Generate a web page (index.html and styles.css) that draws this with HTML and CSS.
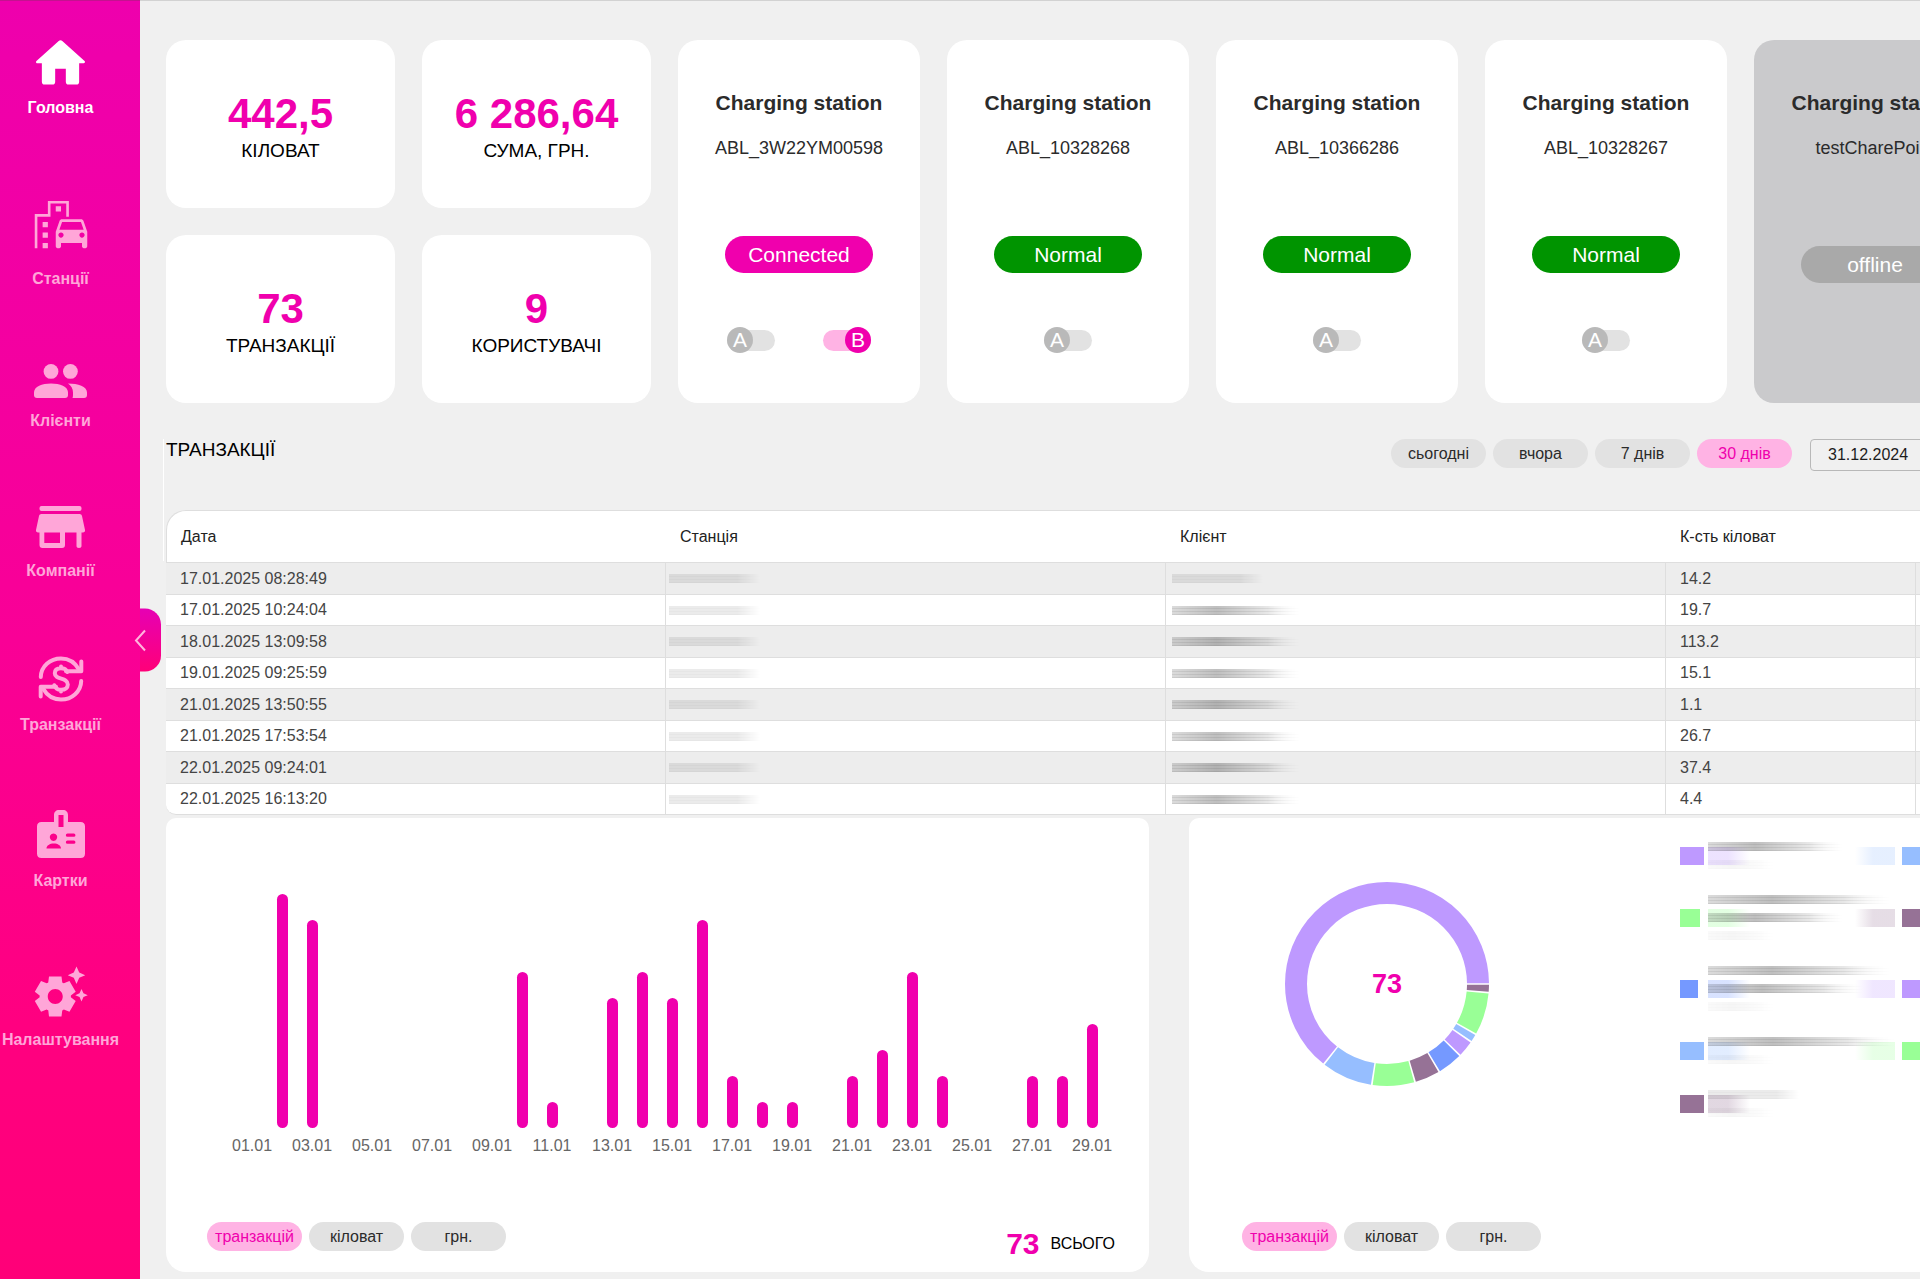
FILE: index.html
```html
<!DOCTYPE html>
<html lang="uk">
<head>
<meta charset="utf-8">
<meta name="viewport" content="width=device-width, initial-scale=1">
<title>Головна</title>
<link rel="stylesheet" href="styles.css">
</head>
<body>
<div class="app">
  <aside class="sidebar">
    <nav class="nav">
      <a class="nav-item active" href="#">
        <svg width="49" height="45" viewBox="2.8 3.3 18.4 16.8"><path d="M10 19v-5h4v5c0 .55.45 1 1 1h3c.55 0 1-.45 1-1v-7h1.7c.46 0 .68-.57.33-.87L12.67 3.6c-.38-.34-.96-.34-1.34 0l-8.36 7.53c-.34.3-.13.87.33.87H5v7c0 .55.45 1 1 1h3c.55 0 1-.45 1-1z"/></svg>
        <span>Головна</span>
      </a>
      <a class="nav-item" href="#">
        <svg width="64" height="63" viewBox="0 0 24 24"><path d="M20.57 10.66C20.43 10.26 20.05 10 19.6 10h-7.19c-.46 0-.83.26-.98.66L10 14.77l.01 5.51c0 .38.31.72.69.72h.62c.38 0 .68-.38.68-.76V19h8v1.24c0 .38.31.76.69.76h.61c.38 0 .69-.34.69-.72l.01-1.37v-4.14l-1.43-4.11zm-8.16.34h7.19l1.03 3h-9.25l1.03-3zM12 17c-.55 0-1-.45-1-1s.45-1 1-1 1 .45 1 1-.45 1-1 1zm8 0c-.55 0-1-.45-1-1s.45-1 1-1 1 .45 1 1-.45 1-1 1z"/><path d="M14 9h1V3H7v5H2v13h1V9h5V4h6zM5 11h2v2H5zM10 5h2v2h-2zM5 15h2v2H5zM5 19h2v2H5z"/></svg>
        <span>Станції</span>
      </a>
      <a class="nav-item" href="#">
        <svg width="53" height="34" viewBox="0 0 53 34"><circle cx="17" cy="7.4" r="7.4"/><circle cx="36.4" cy="7.4" r="7.4"/><path d="M0 31v-2.500c0-6 8-9 17-9s17 3 17 9V31c0 2-1 3-3 3H3c-2 0-3-1-3-3z"/><path d="M34 19.500c10 0 19 3 19 9V31c0 2-1 3-3 3H38.500c.4-1 .5-2 .5-3.500v-2c0-4-2-7-5-9z"/></svg>
        <span>Клієнти</span>
      </a>
      <a class="nav-item" href="#">
        <svg width="49" height="42" viewBox="0 0 49 42"><rect x="3.500" y="0" width="42" height="5" rx="2"/><path fill-rule="evenodd" d="M5.500 8h38c1.400 0 2.200.7 2.500 2l3 14c.2 1.300-.5 2.500-2 2.500h-1.500V40c0 1.300-.8 2-2.500 2s-2.500-.7-2.500-2V26.500H29V39c0 2-1 3-3 3H6.500c-2 0-3-1-3-3V26.500H2c-1.500 0-2.200-1.200-2-2.500l3-14c.3-1.300 1.100-2 2.500-2zM8.300 26.500V37H24V26.500z"/></svg>
        <span>Компанії</span>
      </a>
      <a class="nav-item" href="#">
        <svg class="line-icon" width="46" height="46" viewBox="0 0 46 46"><path d="M2.800 21C3 10.500 12 2.400 23 2.400c8 0 14 4 18 11"/><path d="M43.300 5.500v9.800H28"/><path d="M43.200 25C43 35.500 34 43.600 23 43.600c-8 0-14-4-18-11"/><path d="M2.700 40.500v-9.800H18"/><path d="M29.200 16c-.8-2.500-3-3.800-6.200-3.800-3.800 0-6.200 1.800-6.200 5 0 7 13 4 13 11.300 0 3.300-2.600 5.300-6.600 5.300-3.600 0-6-1.600-6.800-4.600M23 10.500V12M23 34v1.500"/></svg>
        <span>Транзакції</span>
      </a>
      <a class="nav-item" href="#">
        <svg width="48" height="48" viewBox="0 0 48 48"><path fill-rule="evenodd" d="M17 12V5c0-3 2-5 5-5h4c3 0 5 2 5 5v7h12.500c3 0 4.500 1.500 4.500 4.500v27c0 3-1.500 4.500-4.500 4.500h-39C1.500 48 0 46.500 0 43.500v-27c0-3 1.500-4.500 4.500-4.500zM21.500 5v12h5V5zM16.500 23.500a3.700 3.700 0 1 0 .01 0zM9.500 38.500H24c0-3-3.200-5-7.200-5s-7.300 2-7.300 5zM30.500 23.500a1.600 1.600 0 0 0 0 3.300h6.300a1.600 1.600 0 0 0 0-3.300zM30.500 30.500a1.600 1.600 0 0 0 0 3.300h6.300a1.600 1.600 0 0 0 0-3.300z"/></svg>
        <span>Картки</span>
      </a>
      <a class="nav-item" href="#">
        <svg width="53" height="51" viewBox="1.500 1.900 21.200 20.300" overflow="visible"><path d="M17.410 6.590 15 5.500l2.410-1.090L18.500 2l1.090 2.410L22 5.500l-2.410 1.090L18.500 9l-1.090-2.410zm3.870 6.130L20.500 11l-.78 1.720-1.720.78 1.720.78.78 1.720.78-1.720L23 13.500l-1.720-.78zm-5.040 1.650 1.940 1.470-2.500 4.330-2.240-.94c-.2.130-.42.260-.64.370l-.3 2.400h-5l-.3-2.410c-.22-.11-.43-.23-.64-.37l-2.240.94-2.500-4.330 1.940-1.470c-.01-.11-.01-.24-.01-.36s0-.25.010-.37l-1.940-1.470 2.500-4.330 2.240.94c.2-.13.420-.26.640-.37L7.500 6h5l.3 2.410c.22.110.43.230.64.370l2.240-.94 2.500 4.330-1.940 1.470c.010.120.010.240.010.370s0 .240-.010.360zM13 14c0-1.660-1.340-3-3-3s-3 1.340-3 3 1.340 3 3 3 3-1.340 3-3z"/></svg>
        <span>Налаштування</span>
      </a>
    </nav>
    <button class="collapse" type="button" aria-label="Згорнути меню">
      <svg width="14" height="24" viewBox="0 0 14 24"><path d="M12 2 3 12l9 10"/></svg>
    </button>
  </aside>

  <main class="main">
    <div class="content">
      <section class="overview">
        <div class="stats">
          <div class="card stat"><strong>442,5</strong><span>КІЛОВАТ</span></div>
          <div class="card stat"><strong>6 286,64</strong><span>СУМА, ГРН.</span></div>
          <div class="card stat"><strong>73</strong><span>ТРАНЗАКЦІЇ</span></div>
          <div class="card stat"><strong>9</strong><span>КОРИСТУВАЧІ</span></div>
        </div>
        <article class="card station">
          <h2>Charging station</h2><p>ABL_3W22YM00598</p>
          <span class="status connected">Connected</span>
          <div class="connectors">
            <label class="toggle"><input type="checkbox"><span>A</span></label>
            <label class="toggle"><input type="checkbox" checked><span>B</span></label>
          </div>
        </article>
        <article class="card station">
          <h2>Charging station</h2><p>ABL_10328268</p>
          <span class="status">Normal</span>
          <div class="connectors"><label class="toggle"><input type="checkbox"><span>A</span></label></div>
        </article>
        <article class="card station">
          <h2>Charging station</h2><p>ABL_10366286</p>
          <span class="status">Normal</span>
          <div class="connectors"><label class="toggle"><input type="checkbox"><span>A</span></label></div>
        </article>
        <article class="card station">
          <h2>Charging station</h2><p>ABL_10328267</p>
          <span class="status">Normal</span>
          <div class="connectors"><label class="toggle"><input type="checkbox"><span>A</span></label></div>
        </article>
        <article class="card station offline">
          <h2>Charging station</h2><p>testCharePoint</p>
          <span class="status">offline</span>
        </article>
      </section>

      <section class="transactions">
        <header class="section-head">
          <h1>ТРАНЗАКЦІЇ</h1>
          <div class="filters">
            <button class="chip" type="button">сьогодні</button>
            <button class="chip" type="button">вчора</button>
            <button class="chip" type="button">7 днів</button>
            <button class="chip selected" type="button">30 днів</button>
            <input class="date" type="text" value="31.12.2024" aria-label="Дата від">
          </div>
        </header>
        <table class="table">
          <thead>
            <tr><th class="wide">Дата</th><th class="wide">Станція</th><th class="wide">Клієнт</th><th class="narrow">К-сть кіловат</th><th></th></tr>
          </thead>
          <tbody>
            <tr><td>17.01.2025 08:28:49</td><td class="hidden"><i class="smear pale"></i></td><td class="hidden client"><i class="smear pale"></i></td><td>14.2</td><td></td></tr>
            <tr><td>17.01.2025 10:24:04</td><td class="hidden"><i class="smear pale"></i></td><td class="hidden client"><i class="smear"></i></td><td>19.7</td><td></td></tr>
            <tr><td>18.01.2025 13:09:58</td><td class="hidden"><i class="smear pale"></i></td><td class="hidden client"><i class="smear"></i></td><td>113.2</td><td></td></tr>
            <tr><td>19.01.2025 09:25:59</td><td class="hidden"><i class="smear pale"></i></td><td class="hidden client"><i class="smear"></i></td><td>15.1</td><td></td></tr>
            <tr><td>21.01.2025 13:50:55</td><td class="hidden"><i class="smear pale"></i></td><td class="hidden client"><i class="smear"></i></td><td>1.1</td><td></td></tr>
            <tr><td>21.01.2025 17:53:54</td><td class="hidden"><i class="smear pale"></i></td><td class="hidden client"><i class="smear"></i></td><td>26.7</td><td></td></tr>
            <tr><td>22.01.2025 09:24:01</td><td class="hidden"><i class="smear pale"></i></td><td class="hidden client"><i class="smear"></i></td><td>37.4</td><td></td></tr>
            <tr><td>22.01.2025 16:13:20</td><td class="hidden"><i class="smear pale"></i></td><td class="hidden client"><i class="smear"></i></td><td>4.4</td><td></td></tr>
          </tbody>
        </table>
      </section>

      <section class="charts">
        <div class="panel">
          <ol class="bars">
            <li><b style="--v:0"></b><span>01.01</span></li>
            <li><b style="--v:9"></b></li>
            <li><b style="--v:8"></b><span>03.01</span></li>
            <li><b style="--v:0"></b></li>
            <li><b style="--v:0"></b><span>05.01</span></li>
            <li><b style="--v:0"></b></li>
            <li><b style="--v:0"></b><span>07.01</span></li>
            <li><b style="--v:0"></b></li>
            <li><b style="--v:0"></b><span>09.01</span></li>
            <li><b style="--v:6"></b></li>
            <li><b style="--v:1"></b><span>11.01</span></li>
            <li><b style="--v:0"></b></li>
            <li><b style="--v:5"></b><span>13.01</span></li>
            <li><b style="--v:6"></b></li>
            <li><b style="--v:5"></b><span>15.01</span></li>
            <li><b style="--v:8"></b></li>
            <li><b style="--v:2"></b><span>17.01</span></li>
            <li><b style="--v:1"></b></li>
            <li><b style="--v:1"></b><span>19.01</span></li>
            <li><b style="--v:0"></b></li>
            <li><b style="--v:2"></b><span>21.01</span></li>
            <li><b style="--v:3"></b></li>
            <li><b style="--v:6"></b><span>23.01</span></li>
            <li><b style="--v:2"></b></li>
            <li><b style="--v:0"></b><span>25.01</span></li>
            <li><b style="--v:0"></b></li>
            <li><b style="--v:2"></b><span>27.01</span></li>
            <li><b style="--v:2"></b></li>
            <li><b style="--v:4"></b><span>29.01</span></li>
          </ol>
          <footer class="panel-foot">
            <button class="chip selected" type="button">транзакцій</button>
            <button class="chip" type="button">кіловат</button>
            <button class="chip" type="button">грн.</button>
            <p class="total"><strong>73</strong> ВСЬОГО</p>
          </footer>
        </div>

        <div class="panel">
          <div class="share">
            <svg class="donut" viewBox="-102 -102 204 204" width="204" height="204" role="img" aria-label="73">
              <g fill="none" stroke-width="22">
                <circle r="91" pathLength="73" stroke="#967296" stroke-dasharray=".8 72.2" stroke-dashoffset="-.1"/>
                <circle r="91" pathLength="73" stroke="#99ff96" stroke-dasharray="4.8 68.2" stroke-dashoffset="-1.1"/>
                <circle r="91" pathLength="73" stroke="#96beff" stroke-dasharray=".8 72.2" stroke-dashoffset="-6.1"/>
                <circle r="91" pathLength="73" stroke="#be99ff" stroke-dasharray="1.8 71.2" stroke-dashoffset="-7.1"/>
                <circle r="91" pathLength="73" stroke="#7599ff" stroke-dasharray="2.8 70.2" stroke-dashoffset="-9.1"/>
                <circle r="91" pathLength="73" stroke="#967296" stroke-dasharray="2.8 70.2" stroke-dashoffset="-12.1"/>
                <circle r="91" pathLength="73" stroke="#99ff96" stroke-dasharray="4.8 68.2" stroke-dashoffset="-15.1"/>
                <circle r="91" pathLength="73" stroke="#96beff" stroke-dasharray="5.8 67.2" stroke-dashoffset="-20.1"/>
                <circle r="91" pathLength="73" stroke="#be99ff" stroke-dasharray="46.8 26.2" stroke-dashoffset="-26.1"/>
              </g>
              <text class="donut-total" y="9" text-anchor="middle">73</text>
            </svg>
            <ul class="legend">
              <li class="violet next-sky"><i class="swatch"></i><div class="name"><i class="smear w135"></i><i class="smear faint"></i></div></li>
              <li class="sky"><i class="swatch"></i></li>
              <li class="lime next-plum"><i class="swatch w20"></i><div class="name"><i class="smear w182"></i><i class="smear w135"></i><i class="smear faint"></i></div></li>
              <li class="plum"><i class="swatch"></i></li>
              <li class="blue next-violet"><i class="swatch w18"></i><div class="name"><i class="smear w182"></i><i class="smear w155"></i><i class="smear faint"></i></div></li>
              <li class="violet"><i class="swatch"></i></li>
              <li class="sky next-lime"><i class="swatch"></i><div class="name"><i class="smear w187"></i><i class="smear faint"></i></div></li>
              <li class="lime"><i class="swatch"></i></li>
              <li class="plum"><i class="swatch"></i><div class="name"><i class="smear pale"></i><i class="smear faint"></i></div></li>
            </ul>
          </div>
          <footer class="panel-foot share-foot">
            <button class="chip selected" type="button">транзакцій</button>
            <button class="chip" type="button">кіловат</button>
            <button class="chip" type="button">грн.</button>
          </footer>
        </div>
      </section>
    </div>
  </main>
</div>
</body>
</html>
```
FILE: styles.css
```css
* { box-sizing: border-box; margin: 0; padding: 0; }

:root {
  --accent: #f000ad;
  --accent-soft: #ffb3e4;
  --page: #f0f0f0;
  --control: #e2e2e2;
}

body {
  background: var(--page);
  color: #000;
  font: 16px/20px "Liberation Sans", Arial, Helvetica, sans-serif;
}

button, input { font: inherit; color: inherit; }
button { border: 0; cursor: pointer; }
ul, ol { list-style: none; }

.app { display: flex; min-height: 100vh; overflow: hidden; }

/* Sidebar */
.sidebar {
  position: relative;
  z-index: 1;
  flex: 0 0 140px;
  padding: 39px 19px 39px 0;
  border-top: 1px solid #c4128f;
  background: linear-gradient(#ee00ad, #f90096 50%, #ff0080 80%, #ff0078);
}
.nav { display: flex; flex-direction: column; gap: 75px; }
.nav-item {
  display: flex;
  flex-direction: column;
  align-items: center;
  gap: 13px;
  color: #ffa6d8;
  font-weight: bold;
  text-decoration: none;
}
.nav-item.active { color: #fff; }
.nav-item svg { fill: currentColor; }
.nav-item .line-icon {
  fill: none;
  stroke: currentColor;
  stroke-width: 4;
  stroke-linecap: round;
  stroke-linejoin: round;
}
.collapse {
  position: absolute;
  top: 50%;
  left: 100%;
  width: 21px;
  height: 63px;
  display: flex;
  align-items: center;
  transform: translateY(-50%);
  border-radius: 0 16px 16px 0;
  background: linear-gradient(#e600b4, #ff0078);
}
.collapse svg {
  flex: none;
  margin-left: -7px;
  fill: none;
  stroke: #ffb3dd;
  stroke-width: 2;
}

/* Page */
.main {
  flex: 1;
  min-width: 0;
  padding: 39px 26px 7px;
  border-top: 1px solid #d2d2d2;
}
.content { min-width: 2006px; }
.card { border-radius: 20px; background: #fff; text-align: center; }

/* Overview cards */
.overview { display: flex; gap: 27px; }
.stats { display: grid; grid-template-columns: 229px 229px; gap: 27px; }
.stat {
  display: flex;
  flex-direction: column;
  gap: 4px;
  padding: 52px 8px 46px;
  font-size: 19px;
  line-height: 22px;
}
.stat strong { color: var(--accent); font-size: 42px; line-height: 44px; }
.station {
  display: flex;
  flex: 0 0 242px;
  flex-direction: column;
  align-items: center;
  padding: 51px 8px 50px;
  color: #2b2b2b;
}
.station h2 { font-size: 21px; line-height: 24px; }
.station p { margin: 22px 0 77px; font-size: 18px; line-height: 22px; }
.status {
  width: 148px;
  border-radius: 19px;
  background: #009400;
  color: #fff;
  font-size: 21px;
  line-height: 37px;
}
.status.connected { background: var(--accent); }
.offline { background: #cacacc; }
.offline .status { margin-top: 10px; background: #a9a9a9; }
.connectors { display: flex; gap: 48px; margin-top: 54px; }
.toggle {
  position: relative;
  display: flex;
  align-items: center;
  width: 48px;
  height: 26px;
  cursor: pointer;
}
.toggle input {
  width: 100%;
  height: 21px;
  border-radius: 11px;
  appearance: none;
  background: var(--control);
}
.toggle span {
  position: absolute;
  left: 0;
  width: 26px;
  border-radius: 50%;
  background: #b9b9b9;
  color: #fff;
  font-size: 21px;
  line-height: 26px;
}
.toggle input:checked { background: var(--accent-soft); }
.toggle input:checked + span { right: 0; left: auto; background: var(--accent); }

/* Transactions */
.transactions { position: relative; margin-top: 36px; }
.transactions::before {
  content: "";
  position: absolute;
  left: -3px;
  width: 1px;
  height: 122px;
  background: #fff;
}
.section-head { display: flex; justify-content: space-between; margin-bottom: 39px; }
.section-head h1 { font-size: 19px; font-weight: normal; line-height: 22px; }
.filters { display: flex; align-items: flex-start; gap: 7px; }
.filters .selected { background: #f4acdc; }
.chip {
  width: 95px;
  height: 29px;
  border-radius: 15px;
  background: var(--control);
  color: #2b2b2b;
  text-align: center;
}
.chip.selected { background: var(--accent-soft); color: var(--accent); }
.date {
  width: 362px;
  height: 32px;
  margin-left: 11px;
  padding: 0 17px;
  border: 1px solid #b8b8b8;
  border-radius: 4px;
  background: transparent;
  color: #1c1c1c;
}
.table {
  width: 100%;
  border-spacing: 0;
  table-layout: fixed;
  color: #444;
}
.table th {
  height: 53px;
  padding: 0 14px;
  border: solid #dedede;
  border-width: 1px 0;
  background: #fff;
  color: #222;
  font-weight: normal;
  text-align: left;
}
.table .wide { width: 500px; }
.table .narrow { width: 250px; }
.table th:first-child { border-left-width: 1px; border-top-left-radius: 20px; }
.table td {
  height: 32px;
  padding: 0 14px;
  border: solid #dedede;
  border-width: 0 1px 1px 0;
  background: #fff;
}
.table tr:nth-child(even) td { height: 31px; }
.table tr:nth-child(odd) td { background: #ededed; }
.table tr:last-child td:first-child { border-bottom-left-radius: 10px; }
.table .hidden { padding: 0 3px; }
.table .client { padding: 0 6px; }

/* Blurred-out private values */
.smear {
  display: block;
  width: 128px;
  height: 9px;
  background:
    repeating-linear-gradient(transparent 0 2px, rgba(0, 0, 0, .07) 2px 3px),
    linear-gradient(90deg, rgba(0, 0, 0, .14), rgba(0, 0, 0, .25) 35%, rgba(0, 0, 0, .07) 80%, transparent);
  -webkit-mask-image: linear-gradient(90deg, #000 75%, transparent);
  mask-image: linear-gradient(90deg, #000 75%, transparent);
}
.smear.pale {
  width: 91px;
  background:
    repeating-linear-gradient(transparent 0 2px, rgba(0, 0, 0, .02) 2px 3px),
    rgba(0, 0, 0, .08);
}
.smear.faint { width: 70px; opacity: .15; }
.smear.w135 { width: 135px; }
.smear.w155 { width: 155px; }
.smear.w182 { width: 182px; }
.smear.w187 { width: 187px; }

/* Charts */
.charts { display: grid; grid-template-columns: 1fr 1fr; gap: 40px; margin-top: 3px; }
.panel {
  display: flex;
  flex-direction: column;
  justify-content: space-between;
  padding-bottom: 14px;
  border-radius: 10px 10px 20px 20px;
  background: #fff;
}
.bars {
  display: grid;
  grid-template-columns: repeat(29, 1fr);
  margin-bottom: 66px;
  padding: 76px 42px 0 71px;
}
.bars li {
  display: grid;
  grid-template-rows: 234px 20px;
  gap: 8px;
  justify-content: center;
  align-items: end;
  justify-items: center;
  min-width: 0;
}
.bars b {
  width: 11px;
  height: calc(var(--v) * 26px);
  border-radius: 6px;
  background: var(--accent);
}
.bars span { color: #666; }
.panel-foot { display: flex; gap: 7px; padding: 0 34px 0 41px; min-height: 36px; }
.share-foot { padding-left: 53px; }
.total { display: flex; align-items: center; gap: 11px; margin-left: auto; padding-top: 8px; }
.total strong { color: var(--accent); font-size: 30px; line-height: 28px; }

.share { display: flex; align-items: flex-start; padding: 22px 0 0 96px; }
.donut { flex: none; margin: 42px 191px 0 0; }
.donut-total { fill: var(--accent); font-size: 27px; font-weight: bold; }
.legend { display: grid; grid-template-columns: 222px 1fr; gap: 22px 0; }
.legend li { display: flex; align-items: center; }
.swatch { width: 24px; height: 18px; background: var(--c); }
.swatch.w20 { width: 20px; margin-right: 4px; }
.swatch.w18 { width: 18px; margin-right: 6px; }
.name {
  display: flex;
  flex-direction: column;
  gap: 9px;
  width: 187px;
  margin-left: 4px;
  padding: 2px 0;
  background:
    linear-gradient(90deg, color-mix(in srgb, var(--c) 28%, transparent) 20px, transparent 42px) center / 100% 18px no-repeat,
    linear-gradient(270deg, color-mix(in srgb, var(--n, transparent) 24%, transparent) 22px, transparent 40px) center / 100% 18px no-repeat;
}
.violet { --c: #be99ff; }
.sky { --c: #96beff; }
.lime { --c: #99ff96; }
.plum { --c: #967296; }
.blue { --c: #7599ff; }
.next-violet { --n: #be99ff; }
.next-sky { --n: #96beff; }
.next-lime { --n: #99ff96; }
.next-plum { --n: #967296; }
```
